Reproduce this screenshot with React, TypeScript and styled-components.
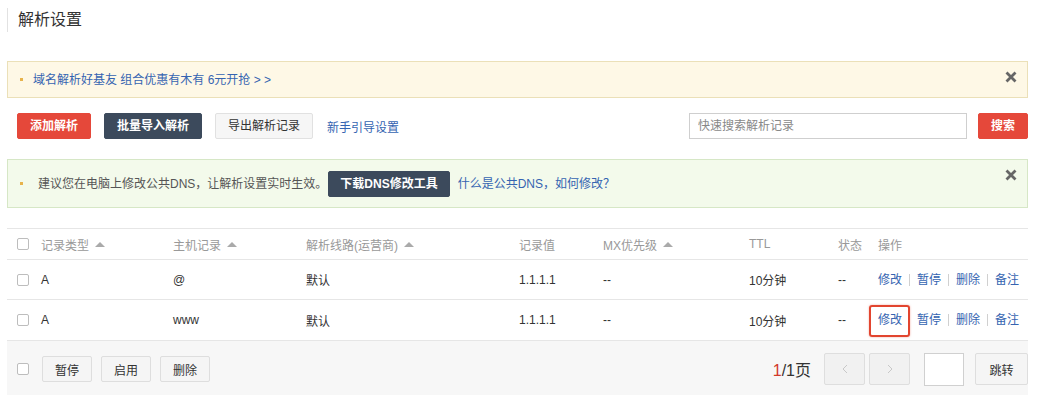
import React from 'react';
import styled, { createGlobalStyle, css } from 'styled-components';

const GlobalStyle = createGlobalStyle`
  html, body {
    margin: 0;
    padding: 0;
    background: #ffffff;
    font-family: 'Liberation Sans', 'Noto Sans CJK SC', sans-serif;
    color: #333;
  }
  * {
    box-sizing: border-box;
  }
`;

const Page = styled.div`
  width: 1038px;
  height: 395px;
  overflow: hidden;
  padding: 8px 10px 0 7px;
`;

const Title = styled.h1`
  margin: 0 0 29px 0;
  height: 24px;
  padding-left: 10px;
  border-left: 1px solid #e2e2e2;
  font-size: 16px;
  font-weight: normal;
  line-height: 24px;
  color: #333;
`;

const Notice = styled.div<{ $tone: 'yellow' | 'green' }>`
  display: flex;
  align-items: center;
  padding: 0 10px 0 12px;
  border: 1px solid;
  font-size: 12px;
  ${(p) =>
    p.$tone === 'yellow'
      ? css`
          height: 37px;
          margin-bottom: 15px;
          background: #fef8e6;
          border-color: #ebe0b8;
        `
      : css`
          height: 49px;
          margin-bottom: 20px;
          background: #f3faeb;
          border-color: #d6e7c6;
        `}
`;

const Bullet = styled.span<{ $gap: number }>`
  width: 3px;
  height: 3px;
  margin-right: ${(p) => p.$gap}px;
  background: #e7b34c;
  flex-shrink: 0;
`;

const NoticeText = styled.span`
  color: #555;
  line-height: 20px;
  margin-right: 1px;
`;

const NoticeLink = styled.a`
  color: #3564b1;
  text-decoration: none;
  line-height: 20px;
  cursor: pointer;
`;

const NoticeBody = styled.div`
  display: flex;
  align-items: center;
  flex: 1;
`;

const Close = styled.span`
  align-self: flex-start;
  margin-top: 9px;
  width: 12px;
  height: 12px;
  display: flex;
  cursor: pointer;
`;

const Button = styled.button<{ $kind: 'red' | 'dark' | 'plain' }>`
  height: 26px;
  padding: 0 12px;
  border-radius: 2px;
  font-family: inherit;
  font-size: 12px;
  line-height: 24px;
  cursor: pointer;
  white-space: nowrap;
  ${(p) =>
    p.$kind === 'red'
      ? css`
          background: #e5483a;
          border: 1px solid #e5483a;
          color: #fff;
          font-weight: bold;
        `
      : p.$kind === 'dark'
      ? css`
          background: #3c4a5c;
          border: 1px solid #3c4a5c;
          color: #fff;
          font-weight: bold;
        `
      : css`
          background: #f6f6f6;
          border: 1px solid #e1e1e1;
          color: #333;
        `}
`;

const BannerButton = styled(Button)`
  margin-right: 8px;
  padding: 0 11px;
`;

const Toolbar = styled.div`
  display: flex;
  align-items: center;
  gap: 13px;
  height: 26px;
  padding-left: 10px;
  margin-bottom: 20px;
`;

const ToolLink = styled.a`
  color: #3564b1;
  font-size: 12px;
  margin-left: 1px;
  cursor: pointer;
`;

const SearchBox = styled.input`
  margin-left: auto;
  width: 278px;
  height: 26px;
  padding: 0 8px;
  border: 1px solid #cfcfcf;
  font-family: inherit;
  font-size: 12px;
  color: #333;
  outline: none;
  &::placeholder {
    color: #888;
  }
`;

const SearchButton = styled(Button)`
  margin-left: -2px;
`;

const Table = styled.div`
  border-top: 1px solid #e6e6e6;
`;

const Row = styled.div<{ $head?: boolean }>`
  display: grid;
  grid-template-columns: 34px 132px 133px 213px 84px 146px 89px 40px 1fr;
  align-items: center;
  height: ${(p) => (p.$head ? 31 : 41)}px;
  border-bottom: 1px solid #e6e6e6;
  font-size: 12px;
  color: ${(p) => (p.$head ? '#999' : '#333')};
  &:nth-child(2) {
    height: 40px;
  }
`;

const Cell = styled.div`
  display: flex;
  align-items: center;
  white-space: nowrap;
`;

const CheckCell = styled(Cell)`
  padding-left: 10px;
`;

const Check = styled.span`
  display: inline-block;
  width: 12px;
  height: 12px;
  border: 1px solid #bdbdbd;
  border-radius: 2px;
  background: #fff;
`;

const SortArrow = styled.span`
  margin-left: 6px;
  width: 0;
  height: 0;
  border-left: 5px solid transparent;
  border-right: 5px solid transparent;
  border-bottom: 5px solid #aaa;
`;

const Actions = styled.div`
  display: flex;
  align-items: center;
  gap: 7px;
`;

const ActionLink = styled.a<{ $highlight?: boolean }>`
  position: relative;
  display: block;
  line-height: 16px;
  color: #3564b1;
  cursor: pointer;
  ${(p) =>
    p.$highlight &&
    css`
      &::after {
        content: '';
        position: absolute;
        left: -9px;
        right: -8px;
        top: -7px;
        bottom: -9px;
        border: 2px solid #e2452f;
        border-radius: 3px;
        box-shadow: 0 0 2px rgba(226, 69, 47, 0.5);
      }
    `}
`;

const Divider = styled.span`
  width: 1px;
  height: 12px;
  background: #d0d0d0;
`;

const Footer = styled.div`
  display: flex;
  align-items: center;
  height: 56px;
  padding: 0 0 0 10px;
  background: #f7f7f7;
`;

const FooterButtons = styled.div`
  display: flex;
  gap: 9px;
  margin-left: 13px;
`;

const SmallButton = styled.button`
  height: 26px;
  padding: 0 12px;
  background: #f5f5f5;
  border: 1px solid #dedede;
  border-radius: 2px;
  font-family: inherit;
  font-size: 12px;
  color: #333;
  cursor: pointer;
`;

const Pager = styled.div`
  display: flex;
  align-items: center;
  margin-left: auto;
  gap: 4px;
`;

const PageInfo = styled.span`
  font-size: 16px;
  color: #333;
  margin-right: 9px;
`;

const CurrentPage = styled.span`
  color: #d2392a;
`;

const PageButton = styled.button`
  width: 41px;
  height: 32px;
  display: flex;
  align-items: center;
  justify-content: center;
  background: #f1f1f1;
  border: 1px solid #dedede;
  border-radius: 2px;
  padding: 0;
  cursor: default;
`;

const PageInput = styled.input`
  width: 40px;
  height: 33px;
  margin-left: 10px;
  border: 1px solid #d0d0d0;
  background: #fff;
  outline: none;
`;

const JumpButton = styled.button`
  width: 53px;
  height: 32px;
  margin-left: 7px;
  background: #f5f5f5;
  border: 1px solid #dedede;
  border-radius: 2px;
  font-family: inherit;
  font-size: 12px;
  color: #333;
  cursor: pointer;
`;

const CloseIcon = () => (
  <svg width="12" height="12" viewBox="0 0 12 12">
    <path d="M1.5 1.5 L10.5 10.5 M10.5 1.5 L1.5 10.5" stroke="#666" strokeWidth="2.8" strokeLinecap="butt" />
  </svg>
);

const Chevron = ({ dir }: { dir: 'left' | 'right' }) => (
  <svg width="6" height="10" viewBox="0 0 6 10">
    <path d={dir === 'left' ? 'M5 1 L1 5 L5 9' : 'M1 1 L5 5 L1 9'} stroke="#c8c8c8" strokeWidth="1" fill="none" />
  </svg>
);

type RecordRow = { type: string; host: string; line: string; value: string; mx: string; ttl: string; status: string };

const records: RecordRow[] = [
  { type: 'A', host: '@', line: '默认', value: '1.1.1.1', mx: '--', ttl: '10分钟', status: '--' },
  { type: 'A', host: 'www', line: '默认', value: '1.1.1.1', mx: '--', ttl: '10分钟', status: '--' },
];

const App: React.FC = () => {
  return (
    <React.Fragment>
      <GlobalStyle />
      <Page>
        <Title>解析设置</Title>

        <Notice $tone="yellow">
          <NoticeBody>
            <Bullet $gap={10} />
            <NoticeLink>域名解析好基友 组合优惠有木有 6元开抢 &gt; &gt;</NoticeLink>
          </NoticeBody>
          <Close>
            <CloseIcon />
          </Close>
        </Notice>

        <Toolbar>
          <Button $kind="red">添加解析</Button>
          <Button $kind="dark">批量导入解析</Button>
          <Button $kind="plain">导出解析记录</Button>
          <ToolLink>新手引导设置</ToolLink>
          <SearchBox placeholder="快速搜索解析记录" />
          <SearchButton $kind="red">搜索</SearchButton>
        </Toolbar>

        <Notice $tone="green">
          <NoticeBody>
            <Bullet $gap={15} />
            <NoticeText>建议您在电脑上修改公共DNS，让解析设置实时生效。</NoticeText>
            <BannerButton $kind="dark">下载DNS修改工具</BannerButton>
            <NoticeLink>什么是公共DNS，如何修改？</NoticeLink>
          </NoticeBody>
          <Close>
            <CloseIcon />
          </Close>
        </Notice>

        <Table>
          <Row $head>
            <CheckCell>
              <Check />
            </CheckCell>
            <Cell>
              记录类型
              <SortArrow />
            </Cell>
            <Cell>
              主机记录
              <SortArrow />
            </Cell>
            <Cell>
              解析线路(运营商)
              <SortArrow />
            </Cell>
            <Cell>记录值</Cell>
            <Cell>
              MX优先级
              <SortArrow />
            </Cell>
            <Cell>TTL</Cell>
            <Cell>状态</Cell>
            <Cell>操作</Cell>
          </Row>
          {records.map((r, i) => (
            <Row key={i}>
              <CheckCell>
                <Check />
              </CheckCell>
              <Cell>{r.type}</Cell>
              <Cell>{r.host}</Cell>
              <Cell>{r.line}</Cell>
              <Cell>{r.value}</Cell>
              <Cell>{r.mx}</Cell>
              <Cell>{r.ttl}</Cell>
              <Cell>{r.status}</Cell>
              <Actions>
                <ActionLink $highlight={i === 1}>修改</ActionLink>
                <Divider />
                <ActionLink>暂停</ActionLink>
                <Divider />
                <ActionLink>删除</ActionLink>
                <Divider />
                <ActionLink>备注</ActionLink>
              </Actions>
            </Row>
          ))}
          <Footer>
            <Check />
            <FooterButtons>
              <SmallButton>暂停</SmallButton>
              <SmallButton>启用</SmallButton>
              <SmallButton>删除</SmallButton>
            </FooterButtons>
            <Pager>
              <PageInfo>
                <CurrentPage>1</CurrentPage>/1页
              </PageInfo>
              <PageButton>
                <Chevron dir="left" />
              </PageButton>
              <PageButton>
                <Chevron dir="right" />
              </PageButton>
              <PageInput />
              <JumpButton>跳转</JumpButton>
            </Pager>
          </Footer>
        </Table>
      </Page>
    </React.Fragment>
  );
};

export default App;
